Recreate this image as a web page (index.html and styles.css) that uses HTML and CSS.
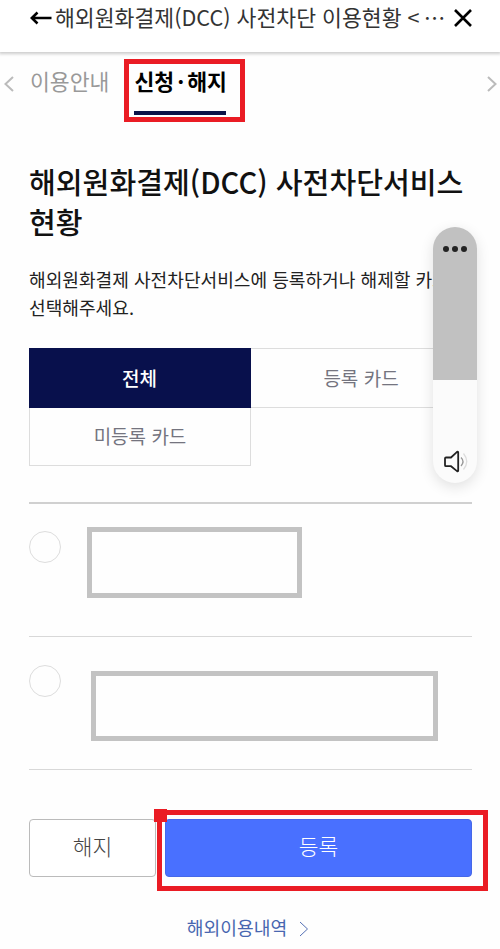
FILE: index.html
```
<!DOCTYPE html>
<html lang="ko">
<head>
    <meta charset="UTF-8">
    <meta name="viewport" content="width=device-width, initial-scale=1">
    <title>해외원화결제(DCC) 사전차단 이용현황</title>
    <link rel="stylesheet" href="styles.css">
</head>
<body>

<header class="header">
    <svg class="back" width="22" height="14" viewBox="0 0 22 14"><path d="M21.5 7H2M7.5 1.5L1.8 7l5.7 5.5"/></svg>
    <div class="header-title">해외원화결제(DCC) 사전차단 이용현황 &lt; <span class="more">⋯</span></div>
    <svg class="close" width="18" height="18" viewBox="0 0 18 18"><path d="M1 1l16 16M17 1L1 17"/></svg>
</header>

<nav class="tabs">
    <svg class="arrow" width="10" height="16" viewBox="0 0 10 16"><path d="M9 1L1.5 8 9 15"/></svg>
    <a class="tab">이용안내</a>
    <a class="tab active">신청<span class="mid">·</span>해지<span class="mark mark-tab"></span></a>
    <svg class="arrow arrow-next" width="10" height="16" viewBox="0 0 10 16"><path d="M1 1l7.5 7L1 15"/></svg>
</nav>

<main class="content">
    <h1 class="title">해외원화결제(DCC) 사전차단서비스<br>현황</h1>
    <p class="desc">해외원화결제 사전차단서비스에 등록하거나 해제할 카드를<br>선택해주세요.</p>

    <div class="filter">
        <button class="filter-item on">전체</button>
        <button class="filter-item">등록 카드</button>
        <button class="filter-item">미등록 카드</button>
    </div>

    <ul class="card-list">
        <li class="card">
            <span class="radio"></span>
            <div class="card-info"></div>
        </li>
        <li class="card second">
            <span class="radio"></span>
            <div class="card-info"></div>
        </li>
    </ul>

    <div class="buttons">
        <button class="btn btn-off">해지</button>
        <div class="btn-wrap">
            <button class="btn btn-on">등록</button>
            <span class="mark mark-btn"></span>
            <span class="mark-dot"></span>
        </div>
    </div>

    <a class="link">해외이용내역
        <svg width="10" height="16" viewBox="0 0 10 16"><path d="M1 1l7.5 7L1 15"/></svg>
    </a>
</main>

<!-- 음량 조절 -->
<div class="volume">
    <div class="volume-level">
        <i class="dot"></i><i class="dot"></i><i class="dot"></i>
    </div>
    <svg class="speaker" width="26" height="24" viewBox="0 0 26 24">
        <path class="body" d="M2 8.5q0-1 1-1h5l6-5.600q1.200-.6 1.200.6v18q0 1.200-1.200.6L8 16.200H3q-1 0-1-1z"/>
        <path class="wave" d="M18 7.500q4 4 0 8.500"/>
        <path class="wave light" d="M20.500 3.500q6.500 8 0 16"/>
    </svg>
</div>

</body>
</html>
```
FILE: styles.css
```
* {
    margin: 0;
    padding: 0;
    box-sizing: border-box;
}

body {
    position: relative;
    height: 949px;
    overflow: hidden;
    background: #fefefe;
    color: #111;
    font-family: "Noto Sans CJK KR", "Noto Sans", sans-serif;
}

svg {
    flex: none;
    fill: none;
    stroke: #000;
}

button {
    font-family: inherit;
}

.header {
    display: flex;
    align-items: center;
    height: 52px;
    padding: 0 28px 16px 30px;
    background: #fff;
    box-shadow: 0 1px 3px 1px #ccc;
}

.back {
    margin-right: 3px;
    stroke-width: 2.6;
}

.header-title {
    flex: 1;
    margin-top: -2px;
    white-space: nowrap;
    font-size: 21.6px;
    line-height: 34px;
    color: #333;
}

.more {
    margin-left: -2px;
}

.close {
    stroke-width: 2.6;
}

.tabs {
    display: flex;
    align-items: center;
    height: 63px;
    padding: 0 3px 0 4px;
}

.arrow {
    stroke: #bbb;
    stroke-width: 2;
}

.arrow-next {
    margin-left: auto;
}

.tab {
    height: 63px;
    margin-left: 16px;
    font-size: 21.6px;
    line-height: 58px;
    color: #999;
}

.tab.active {
    position: relative;
    width: 92px;
    margin-left: 25px;
    border-bottom: 4px solid #0b1348;
    font-weight: bold;
    white-space: nowrap;
    color: #000;
}

.mid {
    margin: 0 3px;
}

/* 강조 표시 */
.mark {
    position: absolute;
    border: 5px solid #ea1c24;
}

.mark-tab {
    top: 7px;
    left: -10px;
    width: 121px;
    height: 63px;
}

.content {
    padding: 46px 28px 0 29px;
}

.title {
    font-size: 29.15px;
    line-height: 40px;
    font-weight: 500;
    white-space: nowrap;
}

.desc {
    margin-top: 24px;
    font-size: 18.1px;
    line-height: 28px;
    color: #222;
    white-space: nowrap;
}

.filter {
    display: grid;
    grid-template-columns: 222px 221px;
    grid-template-rows: 60px 58px;
    margin-top: 27px;
}

.filter-item {
    padding-bottom: 2px;
    border: 1px solid #ddd;
    border-width: 1px 1px 1px 0;
    background: none;
    font-size: 19px;
    color: #74747f;
}

.filter-item:last-child {
    border-width: 0 1px 1px 1px;
}

.filter-item.on {
    border-color: #08104c;
    background: #08104c;
    color: #fff;
    font-weight: 500;
}

.card-list {
    margin-top: 36px;
    border-top: 2px solid #d0d0d0;
    list-style: none;
}

.card {
    display: flex;
    height: 133px;
    padding-top: 23px;
    border-bottom: 1px solid #d8d8d8;
}

.radio {
    width: 32px;
    height: 32px;
    margin-top: 4px;
    border: 1px solid #ddd;
    border-radius: 50%;
}

.card-info {
    width: 215px;
    height: 71px;
    margin-left: 26px;
    border: 5px solid #c3c3c3;
}

.card.second {
    padding-top: 24px;
}

.second .card-info {
    width: 347px;
    height: 70px;
    margin: 10px 0 0 30px;
}

.buttons {
    display: flex;
    gap: 9px;
    margin-top: 49px;
}

.btn {
    height: 58px;
    padding-bottom: 5px;
    border-radius: 4px;
    font-size: 21.5px;
    font-weight: 300;
}

.btn-off {
    width: 127px;
    border: 1px solid #bbb;
    background: #fff;
    color: #444;
}

.btn-wrap {
    position: relative;
    flex: 1;
}

.btn-on {
    display: block;
    width: 100%;
    border: 1px solid #4668e8;
    background: #4970ff;
    color: #fff;
}

.mark-btn {
    top: -9px;
    left: -8px;
    width: 331px;
    height: 81px;
}

.mark-dot {
    position: absolute;
    top: -10px;
    left: -11px;
    width: 13px;
    height: 13px;
    background: #ea1c24;
}

.link {
    display: flex;
    align-items: center;
    justify-content: center;
    gap: 12px;
    margin: 36px 5px 0 0;
    font-size: 18.2px;
    line-height: 28px;
    color: #4866b0;
}

.link svg {
    margin-top: 3px;
    stroke: #5470b5;
}

.volume {
    position: absolute;
    top: 227px;
    left: 433px;
    width: 44px;
    height: 256px;
    overflow: hidden;
    border-radius: 22px;
    background: #fbfbfb;
    box-shadow: 0 4px 14px rgba(0, 0, 0, .12);
}

.volume-level {
    display: flex;
    justify-content: center;
    gap: 3px;
    height: 153px;
    padding-top: 19px;
    background: #c1c1c1;
}

.dot {
    width: 6px;
    height: 6px;
    border-radius: 50%;
    background: #222;
}

.speaker {
    display: block;
    margin: 70px 0 0 10px;
}

.speaker .body {
    stroke: #222;
    stroke-width: 1.8;
}

.speaker .wave {
    stroke: #999;
    stroke-width: 1.3;
}

.speaker .light {
    stroke: #ddd;
}
```
